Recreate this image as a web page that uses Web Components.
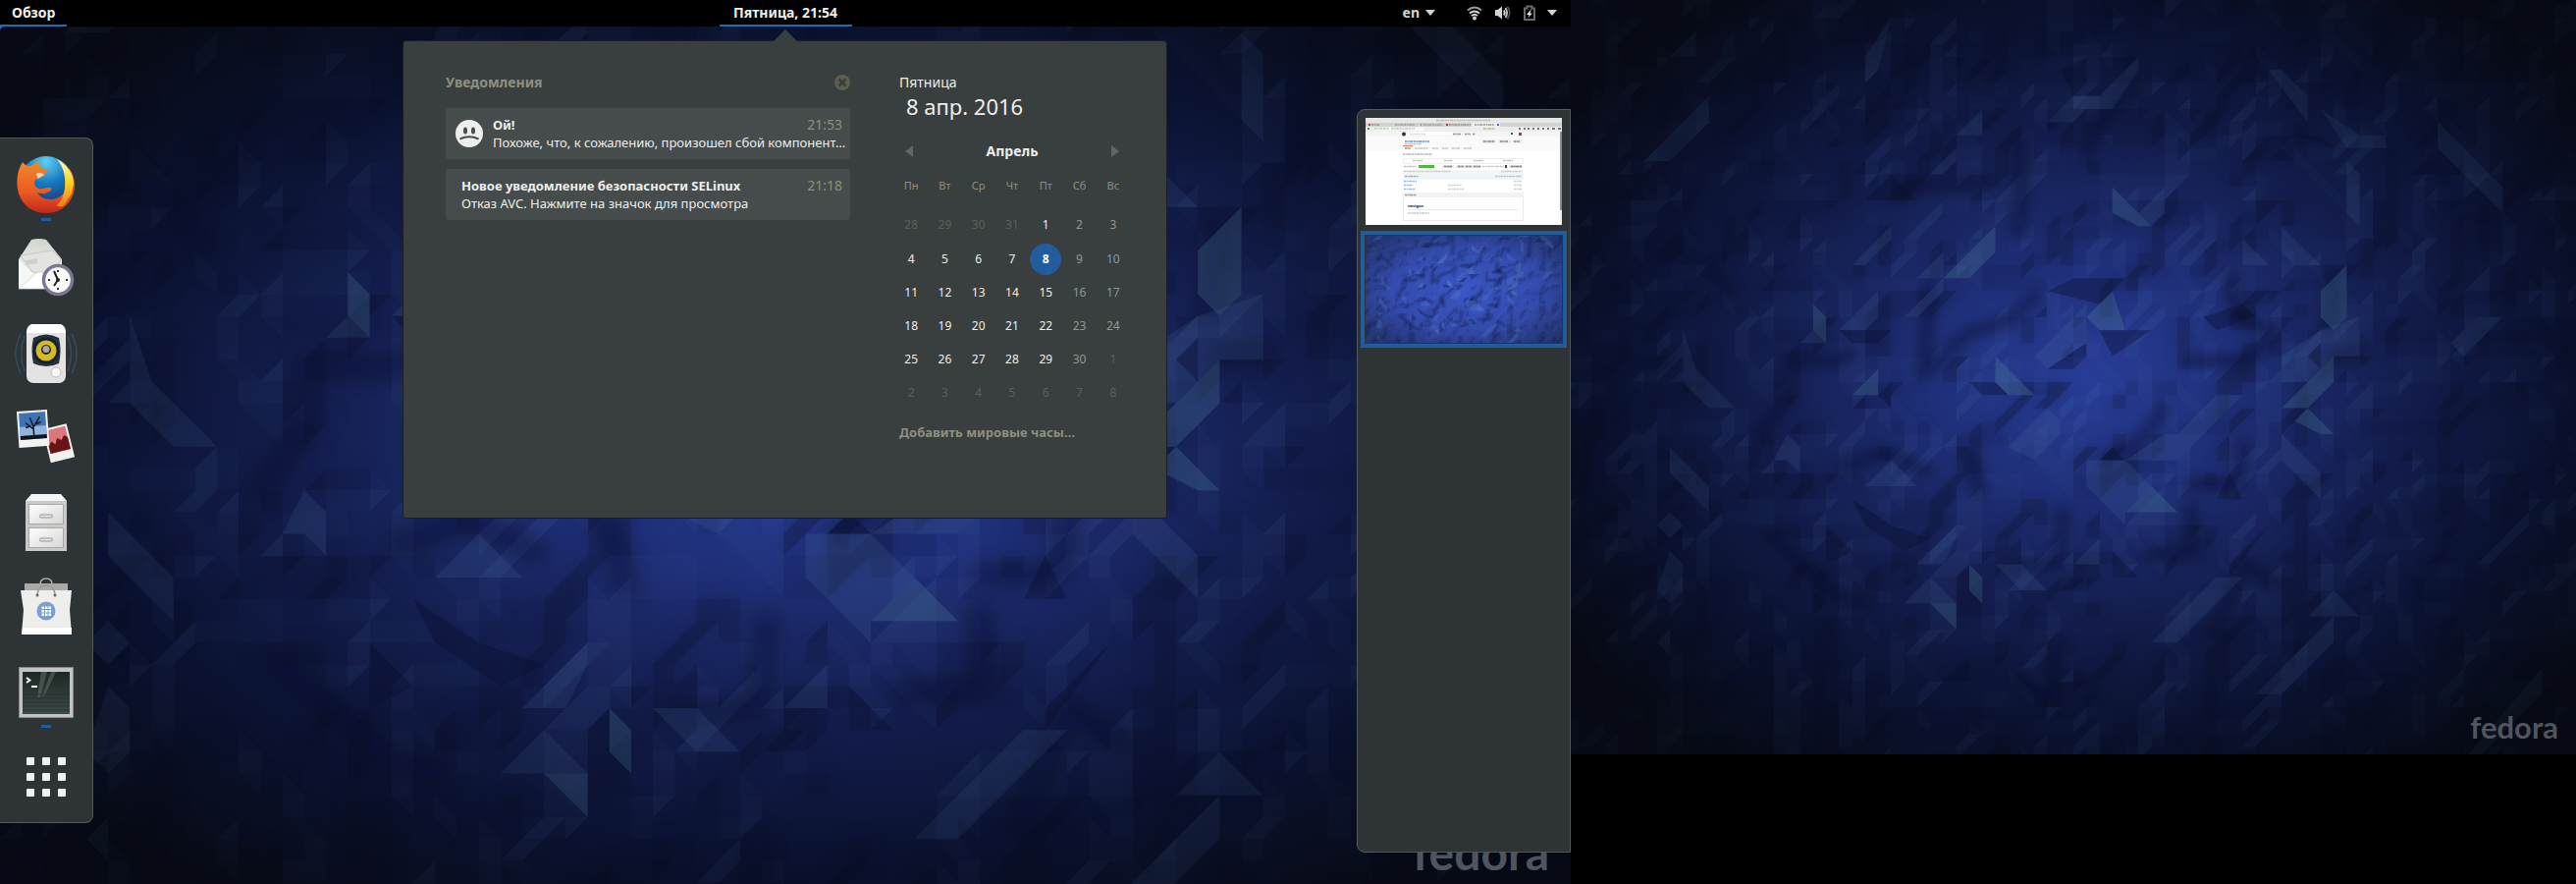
<!DOCTYPE html>
<html lang="ru">
<head>
<meta charset="utf-8">
<title>GNOME Shell</title>
<style>
html, body { margin: 0; min-height: 100%; background: #000; }
body { font: 14px/20px "Noto Sans", "Open Sans", sans-serif; color: #eeeeec; }
</style>
</head>
<body>
<shell-desktop></shell-desktop>
<script>
const define = (name, css, html, setup) => {
  const t = document.createElement('template');
  t.innerHTML = `<style>*{box-sizing:border-box}button,a{font:inherit;color:inherit;background:none;border:0;padding:0;margin:0;text-align:left;text-decoration:none;display:block}svg{display:block}${css}</style>${html}`;
  customElements.define(name, class extends HTMLElement {
    constructor() {
      super();
      this.attachShadow({ mode: 'open' }).append(t.content.cloneNode(true));
    }
    connectedCallback() {
      if (setup && !this.ready) { this.ready = true; setup(this, this.shadowRoot); }
    }
  });
};

/* Faceted wallpaper: a relief of triangles lit from the upper left. */
const CW = 20.3, CH = 23.07, OX = 175, OY = 401;
const relief = (() => {
  const X0 = OX - 9 * CW, Y0 = OY - 18 * CH, NX = 80, NY = 60;
  let seed = 20160408;
  const rnd = () => { seed = (seed * 1664525 + 1013904223) >>> 0; return seed / 4294967296; };
  const coarse = Array.from({ length: 40 }, () => Array.from({ length: 50 }, rnd));
  const h = [];
  for (let j = 0; j <= NY; j++) {
    h.push([]);
    for (let i = 0; i <= NX; i++) {
      const u = i / 2.3, v = j / 2.3, a = u | 0, b = v | 0;
      const p = u - a, q = v - b;
      const n = (coarse[b][a] * (1 - p) + coarse[b][a + 1] * p) * (1 - q) + (coarse[b + 1][a] * (1 - p) + coarse[b + 1][a + 1] * p) * q;
      h[j].push(Math.round(n * 4));
    }
  }
  const level = {};
  const tri = (p, q, r, gx, gy) => {
    const k = Math.max(-4, Math.min(4, Math.round(1.6 * gx + 1.1 * gy)));
    if (!k) return;
    const f = ([i, j]) => `${(X0 + i * CW).toFixed(1)} ${(Y0 + j * CH).toFixed(1)}`;
    (level[k] ||= []).push(`M${f(p)}L${f(q)}L${f(r)}Z`);
  };
  for (let j = 0; j < NY; j++) for (let i = 0; i < NX; i++) {
    const a = h[j][i], b = h[j][i + 1], c = h[j + 1][i], d = h[j + 1][i + 1];
    if (Math.abs(a - d) < Math.abs(b - c) || (Math.abs(a - d) === Math.abs(b - c) && ((i >> 2) + (j >> 2)) & 1)) {
      tri([i, j], [i + 1, j], [i + 1, j + 1], b - a, d - b);
      tri([i, j], [i + 1, j + 1], [i, j + 1], d - c, c - a);
    } else {
      tri([i, j], [i + 1, j], [i, j + 1], b - a, c - a);
      tri([i + 1, j], [i + 1, j + 1], [i, j + 1], d - c, d - b);
    }
  }
  const path = (k, o) => `<path d="${level[k].join('')}" fill="${k > 0 ? '#5f86c8' : '#00020c'}" fill-opacity="${o.toFixed(3)}"/>`;
  const keys = Object.keys(level).map(Number);
  return {
    sharp: keys.map(k => path(k, Math.abs(k) * (k > 0 ? .036 : .06))).join(''),
    soft: keys.filter(k => k < 0).map(k => path(k, Math.abs(k) * .06)).join('')
  };
})();
/* Every facet corner sits on a node of the relief's grid. */
const snap = p => p.split(' ').map(s => {
  const [x, y] = s.split(',').map(Number);
  return `${(OX + Math.round((x - OX) / CW) * CW).toFixed(1)},${(OY + Math.round((y - OY) / CH) * CH).toFixed(1)}`;
}).join(' ');
const poly = (list, fill, o) => list.map(p => `<polygon points="${snap(p)}" fill="${fill}" fill-opacity="${o}"/>`).join('');
const bright = [
  '378,543 398,565 398,607 378,585', '580,492 662,401 662,448 622,492', '805,563 845,517 865,585 825,585',
  '845,335 885,378 905,401 880,401 845,375', '1170,520 1210,470 1210,563 1190,585 1170,563', '1110,725 1190,633 1190,678 1150,725',
  '1130,748 1150,725 1190,770 1160,770', '905,865 945,910 870,910', '663,633 720,700 683,700 663,678', '440,700 480,655 480,700',
  '622,1002 642,1025 642,1070 622,1047', '565,1070 603,1070 603,1115'
];
const soft = [
  '398,607 358,607 378,585', '560,308 603,262 603,285 580,308', '603,238 642,195 642,240', '540,492 580,448 580,492',
  '525,563 580,497 580,520 540,563', '885,378 925,335 925,378 905,401', '745,216 785,170 825,170 780,216', '785,170 825,170 885,105 885,125 840,192 785,192',
  '1110,401 1168,470 1132,470 1110,447', '1048,425 1085,470 1048,470', '440,470 500,401 500,430 460,470', '425,585 480,517 480,563 460,585',
  '500,820 540,862 460,862', '540,1000 603,935 603,957 580,1000', '603,935 660,1000 705,1000 745,1048 705,1048', '525,1070 565,1025 603,1070',
  '135,935 155,910 175,935 155,957', '155,980 175,1002 175,1048 155,1070 135,1048', '155,102 195,57 195,102', '1005,1023 1048,1023 945,1140 905,1140',
  '1190,1048 1230,1093 1150,1093', '1190,1093 1190,1137 1110,1235 1075,1235', '1515,1190 1515,1235 1420,1338 1385,1338',
  '685,795 745,728 765,750 765,770 725,817', '1210,290 1230,312 1230,401 1210,378', '1350,220 1452,335 1452,375 1350,260', '1090,125 1110,125 1150,170 1150,216',
  '1170,195 1230,239 1270,239 1270,262 1210,262', '155,795 215,862 215,905 155,838', '175,585 195,655 260,725 215,725 175,678', '215,178 215,216 155,290 115,290',
  '870,817 945,817 1050,700 1010,700 945,770 925,770', '720,633 805,540 805,610 745,655', '1110,633 1170,585 1230,565 1230,633 1190,633 1150,678 1110,678',
  '785,1002 825,957 825,1002', '315,817 338,770 358,795 358,838 335,817', '460,102 500,35 480,125 460,150', '800,817 865,817 905,862 870,910 865,935 800,862',
  '135,1137 155,1115 155,1160', '1395,633 1450,565 1410,565 1370,610', '1110,770 1168,838 1168,880 1110,817'
];
const dark = [
  '745,655 805,610 805,633 785,655', '480,700 500,678 500,723', '460,355 500,310 540,355', '745,517 785,495 865,495 825,540', '1150,633 1170,610 1170,655',
  '985,563 1048,540 1070,563 1000,585', '378,1048 398,1070 378,1093', '623,678 665,678 680,700 640,700', '845,980 885,1023 845,1023',
  '1085,285 1110,262 1130,285', '1130,240 1170,240 1190,262', '420,585 500,585 480,610 440,610', '805,102 805,150 785,170 765,125', '440,885 500,935 560,957 520,975 460,935',
  '1032,1000 1085,935 1030,1023', '1350,262 1350,310 1310,310', '825,817 845,795 865,817', '400,935 440,975 400,1000', '1028,850 1050,885 1008,885', '825,585 865,585 905,585 845,633'
];
const shade = ['M250 520L215 470L180 440', 'M500 350L540 330L655 320', 'M705 240L700 420', 'M560 500L550 660L620 590L680 570L730 520', 'M440 620L420 640L330 640', 'M300 940L420 1060L470 1070',
  'M1030 480L1040 560L1100 590', 'M885 150L820 220L800 280', 'M1090 600L1050 640L960 640', 'M1190 480L1180 590', 'M770 900L760 1000L680 1010', 'M965 890L970 980L890 985',
  'M420 830L490 800L560 840', 'M930 720L880 790L830 820', 'M620 800L640 880', 'M1050 780L1040 860L960 860', 'M110 650L160 640', 'M1100 1040L1050 1000L1000 1130', 'M760 1130L750 1240L690 1200', 'M1240 620L1180 630', 'M340 700L290 780'];
define('faceted-wallpaper', `
  :host{display:block;position:absolute;inset:0;overflow:hidden;background:#090d1c}
  svg{width:100%;height:100%}
  span{position:absolute;font:700 var(--mark-size,31px)/1 Lato,sans-serif;right:var(--mark-right,18px);bottom:var(--mark-bottom,12px);color:#50545f}
  :host([bare]) span{display:none}`,
  `<svg preserveAspectRatio="none" aria-hidden="true"></svg><span>fedora</span>`,
  (host, root) => {
    const [x, y, w, h] = (host.getAttribute('view') || '0 0 1568 1338').split(' ').map(Number);
    const bare = host.hasAttribute('bare');
    const stops = bare
      ? '<stop stop-color="#3a55c4"/><stop offset=".6" stop-color="#334bac"/><stop offset="1" stop-color="#243574"/>'
      : '<stop stop-color="#283d98"/><stop offset=".25" stop-color="#1f2f78"/><stop offset=".5" stop-color="#141e4f"/><stop offset=".75" stop-color="#0b1230"/><stop offset="1" stop-color="#070a15"/>';
    const svg = root.querySelector('svg');
    svg.setAttribute('viewBox', `${x} ${y} ${w} ${h}`);
    svg.innerHTML = `<defs><radialGradient id="g" cx=".51" cy=".5" r=".62">${stops}</radialGradient>
      <radialGradient id="m" cx=".51" cy=".5" r=".66"><stop stop-color="#fff"/><stop offset=".5" stop-color="#ccc"/><stop offset="1" stop-color="${bare ? '#ccc' : '#444'}"/></radialGradient>
      <mask id="k" maskUnits="userSpaceOnUse" x="${x}" y="${y}" width="${w}" height="${h}"><rect x="${x}" y="${y}" width="${w}" height="${h}" fill="url(#m)"/></mask>
      <filter id="b" x="-20%" y="-20%" width="140%" height="140%"><feGaussianBlur stdDeviation="10"/></filter></defs>
      <rect x="${x}" y="${y}" width="${w}" height="${h}" fill="url(#g)"/>
      <g mask="url(#k)"><g filter="url(#b)">${relief.soft}</g><g shape-rendering="crispEdges">${relief.sharp}</g>
      <path d="${shade.join('')}" fill="none" stroke="#020618" stroke-opacity=".5" stroke-width="16" filter="url(#b)"/>
      ${poly(bright, bare ? '#6f9fe0' : '#4f7f9c', .32)}${poly(soft, bare ? '#6f9fe0' : '#4a70a0', .2)}${poly(dark, '#03071c', .32)}</g>`;
  });

/* ---------- top bar ---------- */
define('top-bar', `
  :host{display:grid;grid-template-columns:1fr auto 1fr;height:27px;background:#000;font-weight:700;line-height:25px;position:relative}
  button{height:27px;border-bottom:2px solid transparent;cursor:pointer;white-space:nowrap}
  .act{width:68px;padding-left:12px;border-color:#256ab1}
  .date{width:135px;text-align:center;border-color:#256ab1}
  .tray{display:flex;justify-content:flex-end;padding-right:14px;color:#d3d3d1}
  .tray button{display:flex;align-items:center}
  .lang{gap:6px;margin-right:32px}
  .sys{gap:12px}
  .corner{position:absolute;left:0;top:25px}`,
  `<div><button class="act">Обзор</button></div>
  <button class="date">Пятница, 21:54</button>
  <div class="tray">
    <button class="lang">en<svg width="10" height="6"><path d="M0 0h10L5 6z" fill="#d3d3d1"/></svg></button>
    <button class="sys" aria-label="Системное меню">
      <svg width="16" height="16" fill="none" stroke="#d3d3d1" stroke-width="2"><path d="M1 5.500Q8 -.500 15 5.500" stroke="#9a9a98"/><path d="M3 8.500Q8 4.500 13 8.500M5 11Q8 8.500 11 11"/><circle cx="8" cy="13.500" r="2" fill="#d3d3d1" stroke="none"/></svg>
      <svg width="18" height="16" fill="none" stroke="#d3d3d1" stroke-width="2"><path d="M1 5h2.500L8 1.500v13L3.500 11H1z" fill="#d3d3d1" stroke="none"/><path d="M10 5.500Q11.500 8 10 10.500"/><path d="M11.500 3Q14.500 8 11.500 13" stroke="#bbb"/><path d="M13.500 1.500Q18 8 13.500 14.500" stroke="#555" stroke-width="1.500"/></svg>
      <svg width="12" height="16"><path d="M1 3.500h2.500v-2h5v2H11V15H1z" fill="none" stroke="#6b6b6a" stroke-width="2"/><path d="M8 4L3 10h2.500L4.500 13 9 8.500H6.500z" fill="#e6e6e4"/></svg>
      <svg width="10" height="6"><path d="M0 0h10L5 6z" fill="#d3d3d1"/></svg>
    </button>
  </div>
  <svg class="corner" width="6" height="6"><path d="M0 0h6v2Q1 2 0 6z" fill="#256ab1"/></svg>`);

/* ---------- dock ---------- */
const icons = {
  firefox: `<defs><radialGradient id="a" cx=".5" cy=".1" r=".9"><stop stop-color="#5fd0f5"/><stop offset=".45" stop-color="#1478bf"/><stop offset="1" stop-color="#14265f"/></radialGradient><linearGradient id="o" x1="0" y1="0" x2="0" y2="1"><stop stop-color="#f08a2c"/><stop offset=".6" stop-color="#ea5a23"/><stop offset="1" stop-color="#c2261b"/></linearGradient><linearGradient id="y" x1="0" y1="0" x2="0" y2="1"><stop stop-color="#fffbd0"/><stop offset=".5" stop-color="#fbd21c"/><stop offset="1" stop-color="#ee7a1e"/></linearGradient></defs>
    <circle cx="32" cy="31" r="28" fill="url(#a)"/><path d="M8 9c-6 9-7 22-4 32 4 13 15 20 28 20 17 0 28-12 29-27 0-8-2-14-6-19 1 6 1 10 0 14-1 10-9 18-19 18-6 0-11-3-13-7 5 2 9 1 12-1 3 0 3-4 1-4-5-1-6 2-11 1-4-1-6-5-4-9 1-2 7-1 7-3 0-3 4-3 6-6-3-3-6-3-8-3 0-3-2-5 0-7-5 1-8 4-10 5-3 0-6-1-8-4z" fill="url(#o)"/><path d="M43 6c11 5 17 16 17 26 0 9-4 17-11 22-3 1-6 0-6-1 4-4 7-9 8-18 1-12-1-20-8-29z" fill="url(#y)"/><path d="M61 27c1 12-3 21-12 28l9-14z" fill="#d8491d"/><path d="M22 21c3-2 7-1 8 1-2 2-6 2-6 5z" fill="#f6d4b5"/>`,
  mail: `<defs><linearGradient id="l" x1="0" y1="0" x2="0" y2="1"><stop stop-color="#d3d4d0"/><stop offset="1" stop-color="#fbfbfa"/></linearGradient></defs>
    <path d="M17 2q8-2 15 0L48 22v29H4V22z" fill="url(#l)"/><path d="M6 18l33-5 8 9-7 14-22-1z" fill="#e3e4e1" stroke="#c6c7c4"/><path d="M4 22l14 15L4 52z" fill="#f7f7f6"/><path d="M4 52l18-16q4-2 8 0l18 16z" fill="#fff" stroke="#d4d4d2" stroke-width=".800"/><path d="M11 23l12-2v5l-12 2z" fill="#cfd0cd"/><circle cx="44" cy="43" r="14.500" fill="#efefef" stroke="#7c7691" stroke-width="3.500"/><circle cx="44" cy="43" r="12.500" fill="#f8f8f7"/><path d="M44 43l-4-9M44 43l-4 6" stroke="#222" stroke-width="2" fill="none"/><circle cx="44" cy="43" r="2" fill="#222"/><path d="M43 33h2v2h-2zM43 51h2v2h-2zM34 42h2v2h-2zM52 42h2v2h-2z" fill="#333"/>`,
  music: `<g fill="none" stroke="#3a5568" stroke-width="1.500"><path d="M6 12Q-4 32 6 52M10 14Q3 32 10 50M58 12Q68 32 58 52M54 14Q61 32 54 50" opacity=".7"/></g><rect x="12" y="2" width="40" height="60" rx="7" fill="#e3e3e2"/><path d="M18 2h28q4 0 6 9H12q2-9 6-9z" fill="#fff"/><path d="M19 16q13-7 26 0 3 13 0 26-13 6-26 0-3-13 0-26z" fill="#243240"/><circle cx="32" cy="29" r="13.500" fill="#17222e"/><circle cx="32" cy="29" r="10.500" fill="#d3bb21"/><circle cx="32" cy="28" r="5" fill="#222"/><circle cx="32" cy="27.500" r="3.500" fill="#a9a9a9"/><circle cx="42" cy="51" r="5" fill="#f8f8f8" stroke="#bbb"/>`,
  photos: `<g transform="rotate(-14 48 40)"><rect x="33" y="19" width="25" height="35" fill="#f1f1ee"/><rect x="35" y="21" width="21" height="24" fill="#d9777b"/><path d="M35 45v-9l4-3 3 4 3-6 4 3 4-4 3 3v12z" fill="#6a1317"/></g><g transform="rotate(-4 18 20)"><rect x="3" y="4" width="31" height="37" fill="#f3f3f1"/><rect x="5" y="6" width="27" height="27" fill="#3f73b4"/><path d="M5 20h27v10H5z" fill="#8fb4dd"/><path d="M5 29h27v4H5z" fill="#10161d"/><path d="M19 30V20M19 23l-8-7M19 21l7-10M22 18l5-2M15 20l-4 1M19 20l-3-9" stroke="#14191f" stroke-width="1.500"/></g>`,
  files: `<defs><linearGradient id="f" x1="0" y1="0" x2="1" y2="1"><stop stop-color="#fff"/><stop offset="1" stop-color="#d6d6d5"/></linearGradient></defs>
    <path d="M17 3h30l6 7H11z" fill="#f5f5f5"/><rect x="11" y="10" width="42" height="51" fill="#c9c9c8"/><rect x="14.500" y="13.500" width="35" height="20" fill="url(#f)" stroke="#a9a9a8"/><rect x="14.500" y="37.500" width="35" height="20" fill="url(#f)" stroke="#a9a9a8"/><g fill="#e6e6e6" stroke="#969696"><rect x="25.500" y="24" width="13" height="3" rx="1.500"/><rect x="25.500" y="48" width="13" height="3" rx="1.500"/></g>`,
  bag: `<path d="M10 8h44v9H10z" fill="#a9a9a8"/><path d="M26 9q0-6 6-6t6 6" fill="none" stroke="#b0b0aa" stroke-width="1.500"/><path d="M6 15h52l-2 20 2 25H7l2-25z" fill="#eeefec"/><path d="M8 53h50v7H7z" fill="#fcfcfb"/><path d="M23 19q1-9 9-9t9 9" fill="none" stroke="#9d9c92" stroke-width="1.500"/><circle cx="23" cy="20" r="1.500" fill="#666"/><circle cx="41" cy="20" r="1.500" fill="#666"/><circle cx="32" cy="36" r="9.500" fill="#7ba0d0"/><path d="M27.500 31.500h2.500v2.500h-2.500zm3.500 0h2.500v2.500H31zm3.500 0H37v2.500h-2.500zm-7 3.500h2.500v2.500h-2.500zm3.500 0h2.500v2.500H31zm3.500 0H37v2.500h-2.500zm-7 3.500h2.500V41h-2.500zm3.500 0h2.500V41H31zm3.500 0H37V41h-2.500z" fill="#fff"/>`,
  term: `<defs><linearGradient id="t" x1="0" y1="0" x2="0" y2="1"><stop stop-color="#1d2825"/><stop offset="1" stop-color="#3d4a47"/></linearGradient></defs><rect x="4.500" y="7.500" width="55" height="51" fill="#c4c2c4" stroke="#8a898b"/><rect x="8" y="12" width="48" height="43" fill="url(#t)"/><path d="M27 12h6l-7 26h-3zM37 12h5L30 37h-2z" fill="#5b6663" opacity=".6"/><path d="M12 18l3.500 2.500L12 23M17 27h6" fill="none" stroke="#fff" stroke-width="1.800"/><path d="M8 35h48M8 39h48M8 43h48M8 47h48M8 51h48" stroke="#2a3532"/>`,
  apps: `<path d="${[13, 29, 45].map(y => [12, 28, 44].map(x => `M${x + 1} ${y}h6q1 0 1 1v6q0 1-1 1h-6q-1 0-1-1v-6q0-1 1-1z`).join('')).join('')}" fill="#f0f0ee"/>`
};
define('dock-item', `
  :host{display:block;height:86px}
  button{width:94px;height:86px;padding:10px 15px;position:relative;cursor:pointer}
  :host([running]) button::after{content:"";position:absolute;left:42px;top:77px;width:10px;height:3px;background:#215d9c}`,
  `<button><svg width="64" height="64" viewBox="0 0 64 64"></svg></button>`,
  (host, root) => {
    root.querySelector('svg').innerHTML = icons[host.getAttribute('icon')];
    root.querySelector('button').setAttribute('aria-label', host.getAttribute('label'));
  });
define('app-dock', `
  :host{display:block;padding:4px 0;background:#2e3436;border:1px solid #53585a;border-left:0;border-radius:0 8px 8px 0;width:95px}`,
  `<dock-item icon="firefox" label="Firefox" running></dock-item><dock-item icon="mail" label="Evolution"></dock-item>
  <dock-item icon="music" label="Rhythmbox"></dock-item><dock-item icon="photos" label="Shotwell"></dock-item>
  <dock-item icon="files" label="Файлы"></dock-item><dock-item icon="bag" label="Центр приложений"></dock-item>
  <dock-item icon="term" label="Терминал" running></dock-item><dock-item icon="apps" label="Показать приложения"></dock-item>`);

/* ---------- notifications and calendar ---------- */
define('notification-card', `
  :host{display:flex;align-items:center;height:52px;background:#454c4b;border-radius:3px;padding:0 8px 0 16px;font-size:13px}
  :host([sad]){padding-left:10px}
  svg{display:none;margin-right:10px;flex:none}
  :host([sad]) svg{display:block}
  div{flex:1;min-width:0}
  p{margin:0;display:flex;justify-content:space-between;line-height:18px;white-space:nowrap}
  time{color:#8e8f80;font-size:14px}`,
  `<svg width="28" height="28"><circle cx="14" cy="14" r="14" fill="#eeeeec"/><ellipse cx="10" cy="11" rx="2" ry="3.500" fill="#454c4b"/><ellipse cx="18" cy="11" rx="2" ry="3.500" fill="#454c4b"/><path d="M4.500 19.500Q14 15 23.500 19.500" fill="none" stroke="#454c4b" stroke-width="2"/></svg>
  <div><p><b><slot name="title"></slot></b><time></time></p><p><span><slot></slot></span></p></div>`,
  (host, root) => { root.querySelector('time').textContent = host.getAttribute('time'); });
define('notification-list', `
  :host{display:flex;flex-direction:column;gap:10px;width:412px}
  header{display:flex;justify-content:space-between;align-items:center;height:18px;margin-bottom:7px}
  h2{margin:0;font-size:14px;line-height:18px;color:#8e8f80}`,
  `<header><h2>Уведомления</h2><button aria-label="Очистить"><svg width="16" height="16"><circle cx="8" cy="8" r="8" fill="#5e5d50"/><path d="M4.500 4.500l7 7M11.500 4.500l-7 7" stroke="#383d3c" stroke-width="2.500"/></svg></button></header>
  <notification-card sad time="21:53"><span slot="title">Ой!</span>Похоже, что, к сожалению, произошел сбой компонент…</notification-card>
  <notification-card time="21:18"><span slot="title">Новое уведомление безопасности SELinux</span>Отказ AVC. Нажмите на значок для просмотра</notification-card>`);
define('month-calendar', `
  :host{display:block;width:240px}
  .day{padding-left:5px;line-height:18px}
  .date{font-size:22px;line-height:30px;padding-left:12px}
  nav{display:flex;justify-content:space-between;align-items:center;margin-top:21px;height:20px;padding:0 11px}
  table{table-layout:fixed;width:100%;border-collapse:collapse;text-align:center;margin-top:11px;font-size:12px}
  th{font-weight:400;height:36px;padding:0 0 8px;font-size:11px;color:#8e8f80}
  td{height:34px;padding:0}
  tr:nth-child(-n+2) td{height:35px}
  td span{display:block;width:32px;height:32px;line-height:32px;margin:0 auto;border-radius:50%}
  .out{color:#5a5f5d}.we{color:#929693}
  .today span{background:#215d9c;font-weight:700;color:#fff}
  a{padding-left:5px;margin-top:13px;font-size:13px;font-weight:700;color:#8e8f80}`,
  `<div class="day">Пятница</div><div class="date">8 апр. 2016</div>
  <nav><button aria-label="Предыдущий месяц"><svg width="8" height="12"><path d="M8 0v12L0 6z" fill="#646464"/></svg></button><b>Апрель</b><button aria-label="Следующий месяц"><svg width="8" height="12"><path d="M0 0v12L8 6z" fill="#646464"/></svg></button></nav>
  <table><thead><tr></tr></thead><tbody></tbody></table>
  <a href="#clocks">Добавить мировые часы…</a>`,
  (host, root) => {
    root.querySelector('thead tr').innerHTML = ['Пн', 'Вт', 'Ср', 'Чт', 'Пт', 'Сб', 'Вс'].map(d => `<th scope="col">${d}</th>`).join('');
    const start = Date.UTC(2016, 2, 28);
    let out = '';
    for (let r = 0; r < 6; r++) {
      out += '<tr>';
      for (let c = 0; c < 7; c++) {
        const d = new Date(start + (r * 7 + c) * 864e5), n = d.getUTCDate(), april = d.getUTCMonth() === 3;
        out += `<td class="${!april ? 'out' : n === 8 ? 'today' : c > 4 ? 'we' : ''}"><span>${n}</span></td>`;
      }
      out += '</tr>';
    }
    root.querySelector('tbody').innerHTML = out;
  });
define('date-menu', `
  :host{display:block;position:absolute;top:41px;left:50%;margin-left:-390px;width:779px;z-index:2}
  .box{display:flex;gap:45px;height:487px;background:#393f3e;border:1px solid #1b1f20;border-radius:4px;padding:33px 36px 0 43px}
  .tip{position:absolute;left:378px;top:-11px}`,
  `<div class="box"><notification-list></notification-list><month-calendar></month-calendar></div>
  <svg class="tip" width="24" height="13"><path d="M0 12L12 0l12 12v1H0z" fill="#393f3e"/></svg>`);

/* ---------- workspaces ---------- */
define('browser-thumb', `
  :host{display:block;height:109px;background:#fff;overflow:hidden}
  svg{width:100%;height:109px}`,
  (() => {
    const r = (x, y, w, h, c) => `<rect x="${x}" y="${y}" width="${w}" height="${h}" fill="${c}"/>`;
    const g = (list, c) => list.map(([x, y, w, h = 1]) => r(x, y, w, h, c)).join('');
    const dash = (x, y, w, c, o = .55) => `<path d="M${x} ${y}h${w}" stroke="${c}" stroke-width="1.500" stroke-dasharray="2.500 .7 1.500 .5 3 .6" stroke-opacity="${o}"/>`;
    return `<svg viewBox="0 0 200 109" preserveAspectRatio="none" aria-hidden="true">
    ${r(0, 0, 200, 5, '#e6e6e6')}${r(0, 5, 200, 4, '#d2d2d2')}${r(0, 9, 200, 5, '#ededed')}${r(108, 5, 29, 4, '#efefef')}
    ${dash(72, 2.500, 56, '#999')}${r(3, 6, 2, 2, '#d33')}${dash(6, 7, 8, '#666')}${dash(30, 7, 20, '#777')}${r(56, 6, 1, 2, '#d66')}${dash(59, 7, 19, '#777')}${r(82, 6, 2, 2, '#b33')}${dash(85, 7, 22, '#666')}${dash(111, 7, 20, '#555')}${r(134, 6, 2, 2, '#3c6ec0')}
    ${r(9, 10, 51, 3, '#fafafa')}${dash(9, 11, 15, '#6b5')}${dash(26, 11, 24, '#999')}${dash(120, 11, 12, '#7a5', .6)}
    <path d="M2 11h2M156 11h2M161 11h2M165 11h2M170 11h2M175 11h2M180 11h2M185 11h2M190 11h3M196 11h3" stroke="#777" stroke-width="2"/>
    ${r(0, 14, 198, 5, '#f5f5f5')}<circle cx="39" cy="16.500" r="2" fill="#333"/>${r(43, 14.500, 45, 3, '#fff')}${dash(45, 16.500, 16, '#bbb')}${dash(89, 16.500, 8, '#444')}${dash(101, 16.500, 6, '#444')}${dash(109, 16.500, 3, '#444')}${r(148, 15, 2, 2, '#357')}${r(156, 15, 3, 3, '#844')}
    ${r(0, 19, 198, 14, '#fafafa')}${dash(40, 24, 25, '#4078c0', .8)}${dash(40, 26.500, 17, '#6a94cc', .5)}${g([[118, 22, 15, 4], [135, 22, 13, 4], [150, 22, 10, 4]], '#ececec')}${dash(120, 24, 11, '#333')}${dash(137, 24, 8, '#333')}${dash(151, 24, 6, '#333')}
    ${r(38, 28, 10, 1, '#e2824a')}${dash(40, 31, 6, '#333')}${dash(50, 31, 14, '#999', .6)}${dash(68, 31, 6, '#999', .6)}${dash(78, 31, 6, '#999', .6)}${dash(88, 31, 8, '#999', .6)}${dash(100, 31, 8, '#999', .6)}
    ${dash(38, 37, 30, '#777')}<rect x="38.500" y="41.500" width="122" height="5" fill="#fff" stroke="#e8e8e8" stroke-width=".7"/>${dash(48, 43.500, 10, '#888')}${dash(80, 43.500, 8, '#888')}${dash(110, 43.500, 10, '#888')}${dash(140, 43.500, 10, '#888')}
    ${dash(39, 49.500, 13, '#888')}${r(54, 48, 16, 3, '#55b53f')}${g([[78, 48, 12, 3], [92, 48, 26, 3], [146, 48, 14, 3]], '#e6e6e6')}${dash(80, 49.500, 8, '#333')}${dash(94, 49.500, 6, '#333')}${dash(102, 49.500, 6, '#333')}${dash(110, 49.500, 7, '#333')}${dash(119, 49.500, 22, '#999')}${r(142, 48, 2, 3, '#444')}${dash(148, 49.500, 11, '#222')}
    ${r(38, 53, 123, 4, '#f5f5f5')}${dash(39, 54.500, 48, '#aaa')}${dash(138, 54.500, 21, '#aaa')}${r(38, 57, 123, 6, '#eef6fa')}${dash(40, 59.500, 14, '#666')}${dash(132, 59.500, 27, '#999')}
    ${[64, 68, 72].map((y, i) => dash(39, y + .5, [13, 9, 12][i], '#4078c0') + (i ? dash(84, y + .5, 12 + i * 2, '#aaa') : '') + dash(151, y + .5, 8, '#aaa')).join('')}
    ${r(38, 76, 123, 5, '#f2f2f2')}${dash(40, 78.500, 12, '#555')}<path d="M38.500 81v23.500h122V81M43 93.500h112" fill="none" stroke="#e4e4e4" stroke-width=".8"/>
    <text x="43" y="91" font-family="Noto Sans,sans-serif" font-size="4" font-weight="700" fill="#222">navigon</text>${dash(43, 97, 22, '#999')}
    ${r(198, 14, 2, 95, '#eee')}${r(198, 14, 2, 80, '#8b8e90')}</svg>`;
  })());
define('workspace-list', `
  :host{display:flex;flex-direction:column;gap:1px;width:218px;background:#2e3436;border:1px solid #53585a;border-radius:8px 0 0 8px;padding:3px}
  button{width:210px;height:119px;padding:4px;border:1px solid transparent;cursor:pointer}
  button.on{border:4px solid #215d9c;padding:1px}
  .w{position:relative;height:109px}`,
  `<button aria-label="Рабочее место 1"><browser-thumb></browser-thumb></button>
  <button class="on" aria-label="Рабочее место 2"><div class="w"><faceted-wallpaper bare view="54 251 1463 936"></faceted-wallpaper></div></button>`);

/* ---------- monitors ---------- */
define('primary-monitor', `
  :host{display:flex;flex-direction:column;position:relative;min-height:100vh;overflow:hidden}
  top-bar{z-index:3}
  faceted-wallpaper{--mark-size:48px;--mark-right:22px;--mark-bottom:8px}
  main{position:relative;flex:1;display:flex;justify-content:space-between;padding:84px 0 32px}
  app-dock{align-self:center;margin-top:-2px}`,
  `<faceted-wallpaper view="54 251 1463 936"></faceted-wallpaper><top-bar></top-bar>
  <main><app-dock></app-dock><workspace-list></workspace-list></main><date-menu></date-menu>`);
define('secondary-monitor', `
  :host{display:block;position:relative;aspect-ratio:4/3;align-self:start}`,
  `<faceted-wallpaper></faceted-wallpaper>`);
define('shell-desktop', `
  :host{display:grid;grid-template-columns:25fr 16fr;min-height:100vh;background:#000}`,
  `<primary-monitor></primary-monitor><secondary-monitor></secondary-monitor>`);
</script>
</body>
</html>
